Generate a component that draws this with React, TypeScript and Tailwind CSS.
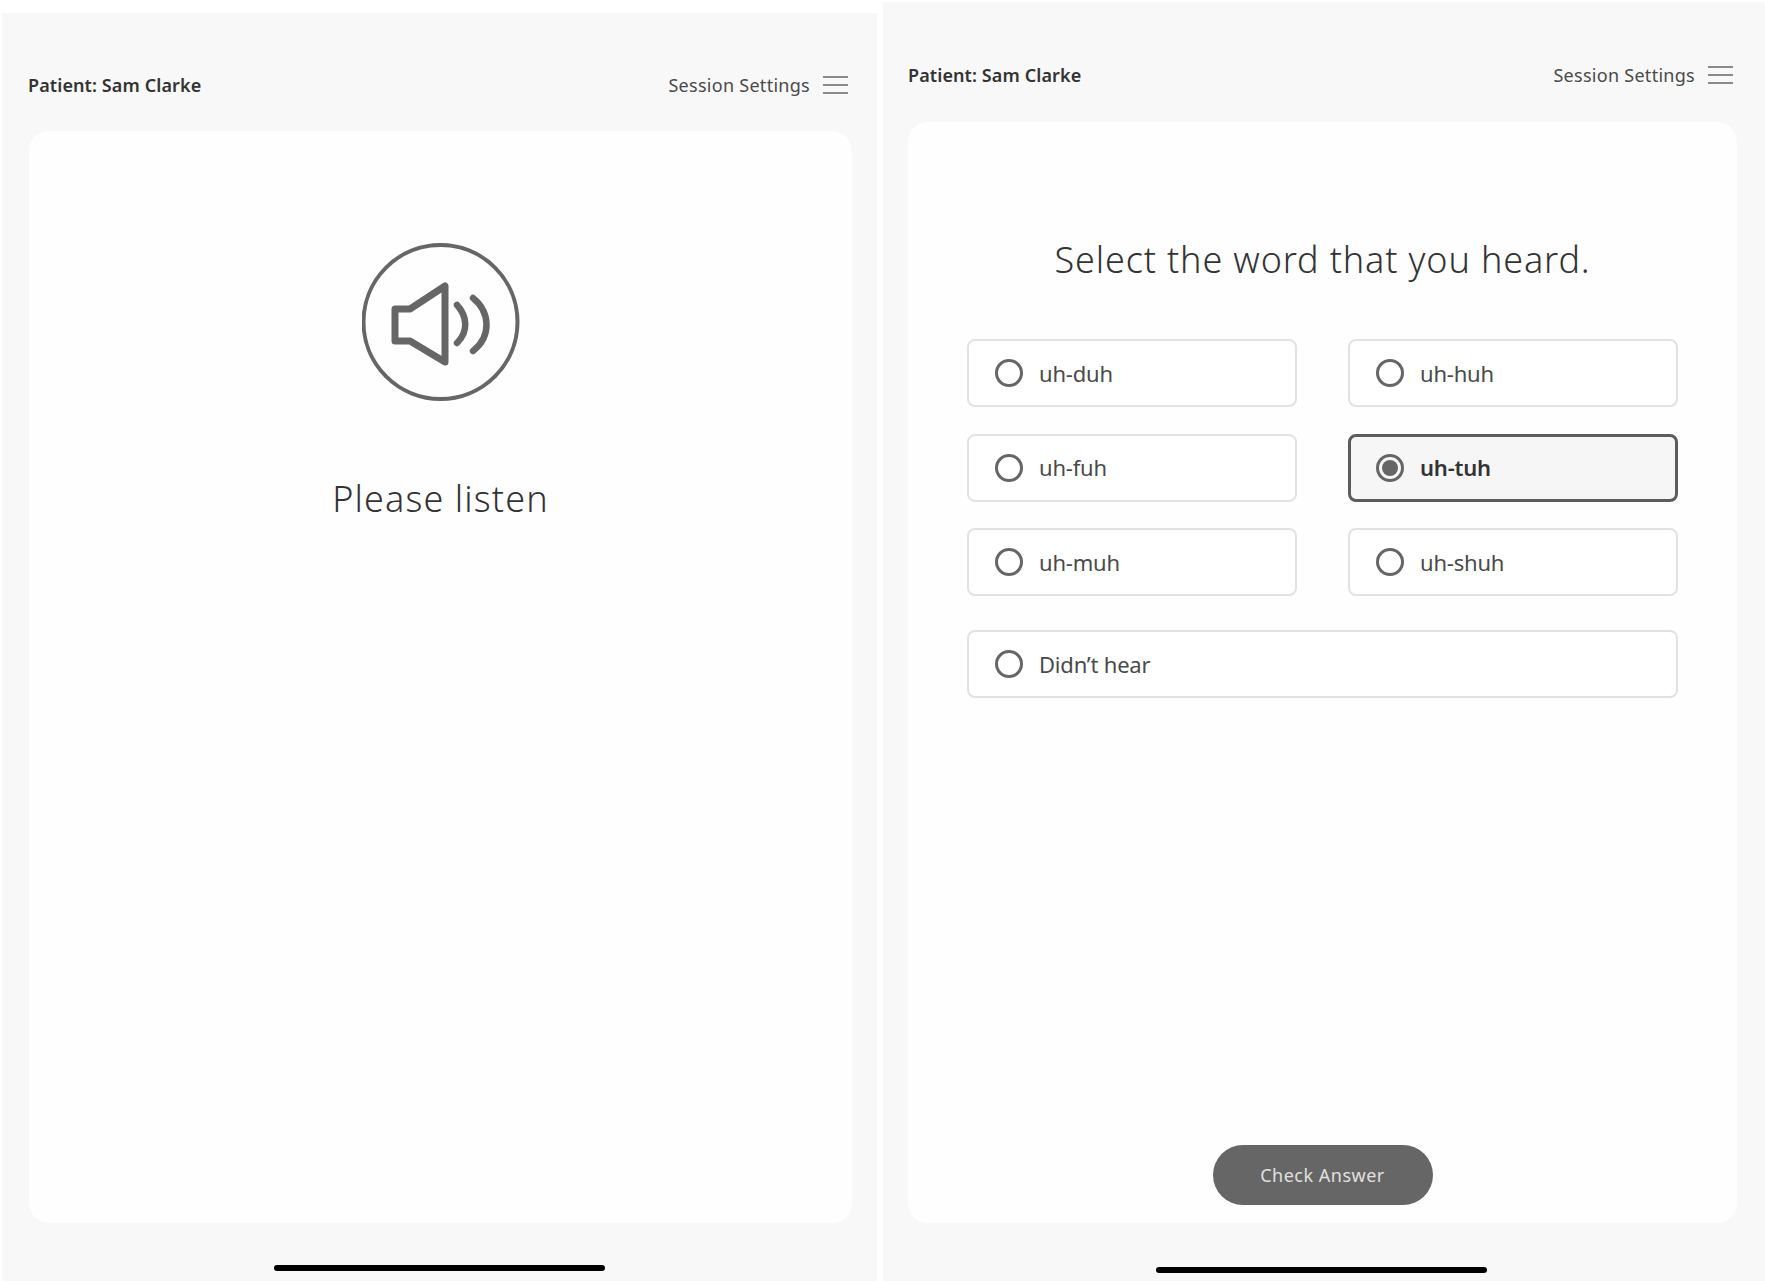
const OPTIONS = [
  { label: 'uh-duh' },
  { label: 'uh-huh' },
  { label: 'uh-fuh' },
  { label: 'uh-tuh', selected: true },
  { label: 'uh-muh' },
  { label: 'uh-shuh' },
]

function MenuIcon() {
  return (
    <div className="flex w-[25px] flex-col gap-[6px]">
      <div className="h-[2px] bg-[#8a8a8a]" />
      <div className="h-[2px] bg-[#8a8a8a]" />
      <div className="h-[2px] bg-[#8a8a8a]" />
    </div>
  )
}

function Header() {
  return (
    <div className="flex h-[46px] items-center justify-between">
      <span className="text-[18px] font-semibold tracking-[0.1px] text-[#333]">Patient: Sam Clarke</span>
      <div className="flex items-center gap-[13px]">
        <span className="text-[18px] tracking-[0.28px] text-[#4a4a4a]">Session Settings</span>
        <MenuIcon />
      </div>
    </div>
  )
}

function HomeBar({ className }: { className: string }) {
  return (
    <div className={`flex h-[58px] items-start justify-center ${className}`}>
      <div className="h-[6px] w-[331px] rounded-full bg-black" />
    </div>
  )
}

function SpeakerIcon() {
  return (
    <svg width="158" height="158" viewBox="0 0 158 158" fill="none">
      <circle cx="78.5" cy="79" r="77" stroke="#666" strokeWidth="4" />
      <path
        d="M33 66h15L83 43v76L48 98H33z"
        stroke="#666"
        strokeWidth="7"
        strokeLinejoin="round"
      />
      <path d="M95 62c10 11 12 26 0 38" stroke="#666" strokeWidth="6.5" strokeLinecap="round" />
      <path d="M111 55c17 14 19 38 0 53" stroke="#666" strokeWidth="6.5" strokeLinecap="round" />
    </svg>
  )
}

function Option({ label, selected }: { label: string; selected?: boolean }) {
  return (
    <div
      className={`flex h-[68px] items-center gap-[16px] rounded-[8px] ${
        selected ? 'border-[3px] border-[#5c5c5c] bg-[#f6f6f6] px-[25px]' : 'border-2 border-[#e2e2e2] bg-white px-[26px]'
      }`}
    >
      <div className="flex size-[28px] shrink-0 items-center justify-center rounded-full border-[3px] border-[#666]">
        {selected && <div className="size-[16px] rounded-full bg-[#666]" />}
      </div>
      <span className={`text-[22px] tracking-[-0.2px] ${selected ? 'font-semibold text-[#333]' : 'text-[#4a4a4a]'}`}>{label}</span>
    </div>
  )
}

export default function App() {
  return (
    <div className="flex h-[1284px] w-[1765px] overflow-hidden bg-white font-['Noto_Sans',sans-serif]">
      {/* listening screen */}
      <div className="ml-[2px] mt-[13px] flex h-[1268px] w-[875px] flex-col bg-[#f8f8f8]">
        <div className="pl-[26px] pr-[29px] pt-[49px]">
          <Header />
        </div>
        <div className="ml-[27px] mr-[25px] mt-[23px] flex flex-1 flex-col items-center rounded-[20px] bg-[#fefefe] pt-[112px]">
          <SpeakerIcon />
          <h1 className="mt-[71px] text-[36px] font-light leading-[54px] tracking-[1.1px] text-[#333]">Please listen</h1>
        </div>
        <HomeBar className="pt-[42px]" />
      </div>

      {/* word selection screen */}
      <div className="ml-[6px] mt-[2px] flex h-[1279px] flex-1 flex-col bg-[#f8f8f8]">
        <div className="pl-[25px] pr-[32px] pt-[50px]">
          <Header />
        </div>
        <div className="ml-[25px] mr-[28px] mt-[24px] flex flex-1 flex-col items-center rounded-[20px] bg-[#fefefe] pt-[111px]">
          <h1 className="text-[36px] font-light leading-[54px] tracking-[0.85px] text-[#333]">Select the word that you heard.</h1>
          <div className="mt-[52px] grid w-[711px] grid-cols-2 gap-x-[51px] gap-y-[26.5px]">
            {OPTIONS.map((o) => (
              <Option key={o.label} label={o.label} selected={o.selected} />
            ))}
          </div>
          <div className="mt-[34px] w-[711px]">
            <Option label="Didn’t hear" />
          </div>
          <button type="button" className="mb-[18px] mt-auto h-[60px] w-[220px] rounded-full bg-[#666] text-[18px] tracking-[0.5px] text-[#e0e0e0]">
            Check Answer
          </button>
        </div>
        <HomeBar className="pr-[5px] pt-[44px]" />
      </div>
    </div>
  )
}
